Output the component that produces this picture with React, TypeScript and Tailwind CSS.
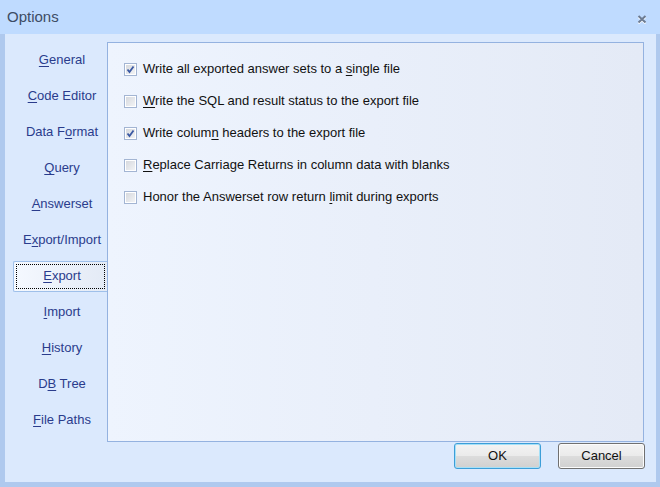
import React from 'react';

const tabs: Array<{ pre: string; key: string; post: string }> = [
  { pre: '', key: 'G', post: 'eneral' },
  { pre: '', key: 'C', post: 'ode Editor' },
  { pre: 'Data F', key: 'o', post: 'rmat' },
  { pre: '', key: 'Q', post: 'uery' },
  { pre: '', key: 'A', post: 'nswerset' },
  { pre: 'E', key: 'x', post: 'port/Import' },
  { pre: '', key: 'E', post: 'xport' },
  { pre: '', key: 'I', post: 'mport' },
  { pre: '', key: 'H', post: 'istory' },
  { pre: 'D', key: 'B', post: ' Tree' },
  { pre: '', key: 'F', post: 'ile Paths' },
];

const options: Array<{ pre: string; key: string; post: string; checked: boolean }> = [
  { pre: 'Write all exported answer sets to a ', key: 's', post: 'ingle file', checked: true },
  { pre: '', key: 'W', post: 'rite the SQL and result status to the export file', checked: false },
  { pre: 'Write colum', key: 'n', post: ' headers to the export file', checked: true },
  { pre: '', key: 'R', post: 'eplace Carriage Returns in column data with blanks', checked: false },
  { pre: 'Honor the Answerset row return ', key: 'l', post: 'imit during exports', checked: false },
];

function CheckBox({ checked }: { checked: boolean }) {
  return (
    <span className="flex h-[13px] w-[13px] shrink-0 items-center justify-center border border-[#a3b5d3] bg-white">
      <span className="relative h-[9px] w-[9px] bg-gradient-to-br from-[#d6d9de] to-[#f2f3f5]">
        {checked && (
          <svg width="11" height="11" viewBox="0 0 11 11" className="absolute -left-px -top-px">
            <path d="M2.5 5.5 L4.5 8 L8.5 2.5" fill="none" stroke="#3a58a3" strokeWidth="1.8" />
          </svg>
        )}
      </span>
    </span>
  );
}

export default function App() {
  return (
    <div
      className="flex h-[487px] w-[660px] flex-col bg-[#afc9ee] text-[13px]"
      style={{ fontFamily: '"Liberation Sans", Arial, sans-serif' }}
    >
      <div className="flex h-[34px] shrink-0 items-center justify-between bg-[#bfdbff] pl-[7px] pr-[13px]">
        <span className="text-[15px] text-[#3d4c64]">Options</span>
        <svg width="10" height="10" viewBox="0 0 10 10" className="mt-[4px]">
          <path d="M1.5 2 L8.5 8.5 M8.5 2 L1.5 8.5" stroke="#ffffff" strokeWidth="2" transform="translate(0 1)" />
          <path d="M1.5 2 L8.5 8.5 M8.5 2 L1.5 8.5" stroke="#6d7c93" strokeWidth="2" />
        </svg>
      </div>
      <div className="mb-[5px] ml-[5px] mr-[4px] flex flex-1 flex-col bg-[#dbe9fd]">
        <div className="flex pt-[8px]">
          <div className="flex w-[102px] flex-col pl-[8px]">
            {tabs.map((t, i) =>
              i === 6 ? (
                <div key={i} className="flex h-[36px] items-center py-[2px]">
                  <div className="flex h-[31px] w-full items-center justify-center rounded-l-[2px] border border-r-0 border-[#9fc0ea] bg-gradient-to-r from-[#f5f9ff] to-[#e3eaf5] p-[2px]">
                    <div className="flex h-full w-full items-center justify-center border border-dotted border-black pl-[3px] text-[#2a3c8c]">
                      {t.pre}
                      <span className="underline underline-offset-2">{t.key}</span>
                      {t.post}
                    </div>
                  </div>
                </div>
              ) : (
                <div key={i} className="flex h-[36px] items-center justify-center pl-[4px] text-[#2a3c8c]">
                  <span>
                    {t.pre}
                    <span className="underline underline-offset-2">{t.key}</span>
                    {t.post}
                  </span>
                </div>
              )
            )}
          </div>
          <div className="flex h-[400px] w-[537px] flex-col border border-[#94b2e0] bg-gradient-to-r from-[#eef4fe] to-[#e4eaf6] pl-[16px] pt-[10px]">
            {options.map((o, i) => (
              <div key={i} className="flex h-[32px] items-center gap-[6px] text-[#111]">
                <CheckBox checked={o.checked} />
                <span>
                  {o.pre}
                  <span className="underline underline-offset-2">{o.key}</span>
                  {o.post}
                </span>
              </div>
            ))}
          </div>
        </div>
        <div className="flex justify-end gap-[17px] pr-[11px] pt-px">
          <button className="flex h-[26px] w-[87px] items-center justify-center rounded-[3px] border border-[#3c9ed8] bg-[linear-gradient(#f3f3f3_0%,#ebebeb_48%,#dcdcdc_52%,#d0d0d0_100%)] text-[#111] shadow-[inset_0_0_0_1px_#a6e0f7]">
            OK
          </button>
          <button className="flex h-[26px] w-[87px] items-center justify-center rounded-[3px] border border-[#707070] bg-[linear-gradient(#f3f3f3_0%,#ebebeb_48%,#dcdcdc_52%,#d0d0d0_100%)] text-[#111] shadow-[inset_0_0_0_1px_#fcfcfc]">
            Cancel
          </button>
        </div>
      </div>
    </div>
  );
}
